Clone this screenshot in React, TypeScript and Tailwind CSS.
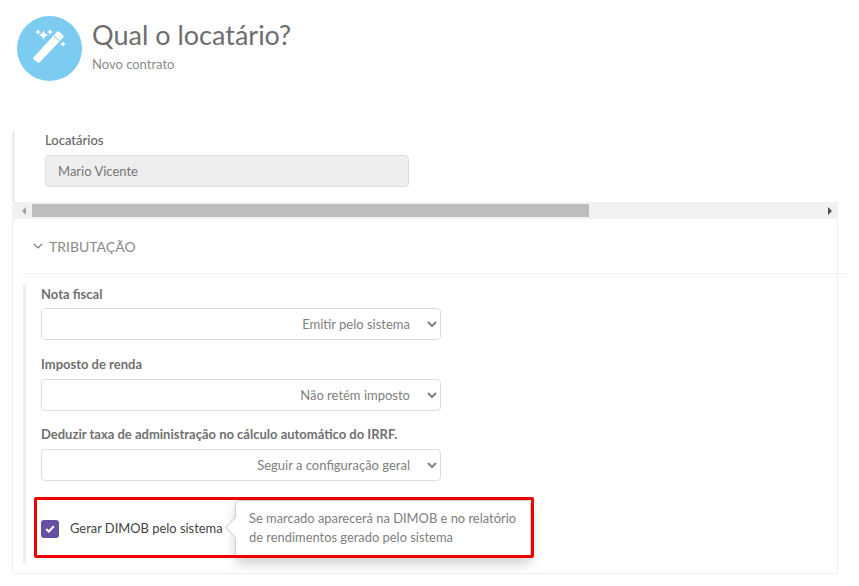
import React from "react";

function Wand() {
  return (
    <svg width="65" height="65" viewBox="0 0 65 65" fill="none">
      <circle cx="32.5" cy="32.5" r="32.5" fill="#7ccbf0" />
      <path d="M16.5 41.5 L40 15.8 Q41 14.8 42 15.6 L46.2 19.6 Q47 20.6 46.2 21.6 L22.8 46.2 Q21.8 47.2 20.8 46.4 L16.6 43.4 Q15.8 42.5 16.5 41.5Z" fill="#fff" />
      <path d="M37 20 L42.4 25.2" stroke="#7ccbf0" strokeWidth="1" />
      <path d="M26.5 13.5 Q27 18.5 32 19 Q27 19.5 26.5 24.5 Q26 19.5 21 19 Q26 18.5 26.5 13.5Z" fill="#fff" />
      <path d="M21 13 Q21.3 15.7 24 16 Q21.3 16.3 21 19 Q20.7 16.3 18 16 Q20.7 15.7 21 13Z" fill="#fff" />
      <path d="M33 13 Q33.3 15.7 36 16 Q33.3 16.3 33 19 Q32.7 16.3 30 16 Q32.7 15.7 33 13Z" fill="#fff" />
      <path d="M46 25 Q46.3 27.7 49 28 Q46.3 28.3 46 31 Q45.7 28.3 43 28 Q45.7 27.7 46 25Z" fill="#fff" />
    </svg>
  );
}

function Field({ label, value, mt, gap }: { label: string; value: string; mt: string; gap: string }) {
  return (
    <div className={mt}>
      <div className="text-[13px] leading-[16px] font-bold text-[#707070]">{label}</div>
      <select
        defaultValue={value}
        className={`${gap} block h-[32px] w-[400px] rounded-[4px] border border-[#dddddd] bg-white pr-[14px] text-[13px] text-[#808080] [text-align-last:right]`}
      >
        <option>{value}</option>
      </select>
    </div>
  );
}

export default function App() {
  return (
    <div className="relative h-[586px] w-[859px] overflow-hidden bg-white font-['Lato',sans-serif] text-[#707070]">
      <header className="flex pl-[17px] pt-[16px]">
        <Wand />
        <div className="ml-[10px]">
          <h1 className="mt-[2px] text-[27px] leading-[34px] text-[#6e6e6e]">Qual o locatário?</h1>
          <p className="mt-[4px] text-[13px] leading-[16px] text-[#8c8c8c]">Novo contrato</p>
        </div>
      </header>

      <section className="ml-[12px] mt-[50px] w-[826px]">
        <div className="h-[71px] border-l-[3px] border-[#eeeeee] pl-[30px]">
          <div className="pt-[1px] text-[13px] leading-[16px] font-medium text-[#666666]">Locatários</div>
          <div className="mt-[7px] flex h-[32px] w-[364px] items-center rounded-[4px] border border-[#dddddd] bg-[#eeeeee] pl-[12px] pt-[1px] text-[13px] text-[#777777]">
            Mario Vicente
          </div>
        </div>

        <div className="flex h-[17px] items-center bg-[#f1f1f1] pl-[3px]">
          <div className="flex w-[17px] justify-center">
            <span className="h-0 w-0 border-y-[4px] border-r-[4px] border-y-transparent border-r-[#a3a3a3]" />
          </div>
          <div className="h-[13px] w-[557px] bg-[#bdbdbd]" />
          <div className="flex flex-1 justify-end pr-[6px]">
            <span className="h-0 w-0 border-y-[4px] border-l-[4px] border-y-transparent border-l-[#505050]" />
          </div>
        </div>

        <div className="h-[355px] rounded-[4px] border border-t-0 border-[#f0f0f0] bg-white">
          <div className="ml-[10px] mr-[-10px] flex h-[55px] items-center border-b border-[#f0f0f0] pl-[10px]">
            <svg width="10" height="6" viewBox="0 0 10 6" fill="none">
              <path d="M0.8 0.8 L5 5 L9.2 0.8" stroke="#777777" strokeWidth="1.2" />
            </svg>
            <span className="ml-[6px] text-[14px] text-[#8a8a8a]">TRIBUTAÇÃO</span>
          </div>

          <div className="relative ml-[10px] mt-[11px] h-[278px] border-l-[3px] border-[#eeeeee] pl-[15px] pt-[1px]">
            <Field label="Nota fiscal" value="Emitir pelo sistema" mt="mt-0" gap="mt-[6px]" />
            <Field label="Imposto de renda" value="Não retém imposto" mt="mt-[16px]" gap="mt-[7px]" />
            <Field label="Deduzir taxa de administração no cálculo automático do IRRF." value="Seguir a configuração geral" mt="mt-[15px]" gap="mt-[7px]" />

            <div className="mt-[38px] flex items-center">
              <span className="flex h-[18px] w-[18px] items-center justify-center rounded-[3px] bg-[#6750a4]">
                <svg width="10" height="8" viewBox="0 0 10 8" fill="none">
                  <path d="M1.2 4 L3.8 6.5 L8.8 1.2" stroke="#fff" strokeWidth="2" />
                </svg>
              </span>
              <span className="ml-[11px] text-[12.9px] text-[#444444]">Gerar DIMOB pelo sistema</span>
            </div>

            <div className="absolute left-[209px] top-[215px] h-[58px] w-[296px] rounded-[4px] border border-[#cfcfcf] bg-white pl-[13px] pt-[8px] text-[12.9px] leading-[19px] text-[#808080] shadow-[0_6px_12px_rgba(0,0,0,0.18)]">
              <span className="absolute left-[-8px] top-[19px] h-[15px] w-[15px] rotate-45 border-b border-l border-[#cfcfcf] bg-white" />
              <div className="relative">Se marcado aparecerá na DIMOB e no relatório</div>
              <div className="relative">de rendimentos gerado pelo sistema</div>
            </div>

            <div className="absolute left-[8px] top-[212px] h-[61px] w-[500px] rounded-[2px] border-[3px] border-[#f00000]" />
          </div>
        </div>
      </section>
    </div>
  );
}
